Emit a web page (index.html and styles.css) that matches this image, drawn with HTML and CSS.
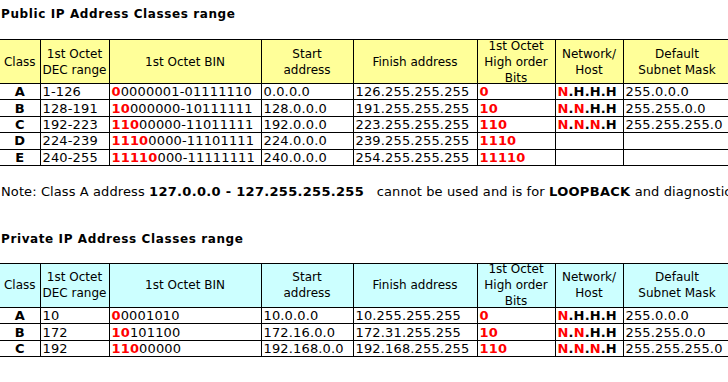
FILE: index.html
```html
<!DOCTYPE html>
<html>
<head>
<meta charset="utf-8">
<link rel="stylesheet" href="styles.css">
</head>
<body>
<div class="page">
  <h2 class="title t1">Public IP Address Classes range</h2>
  <table class="ip public">
    <colgroup>
      <col class="c1"><col class="c2"><col class="c3"><col class="c4"><col class="c5"><col class="c6"><col class="c7"><col class="c8">
    </colgroup>
    <thead>
      <tr>
        <th><div class="hc">Class</div></th>
        <th><div class="hc">1st Octet<br>DEC range</div></th>
        <th><div class="hc">1st Octet BIN</div></th>
        <th><div class="hc">Start<br>address</div></th>
        <th><div class="hc">Finish address</div></th>
        <th><div class="hc">1st Octet<br>High order<br>Bits</div></th>
        <th><div class="hc">Network/<br>Host</div></th>
        <th><div class="hc">Default<br>Subnet Mask</div></th>
      </tr>
    </thead>
    <tbody>
      <tr><td class="cls">A</td><td>1-126</td><td><b class="r">0</b>0000001-01111110</td><td>0.0.0.0</td><td>126.255.255.255</td><td class="bits">0</td><td class="nh"><span class="r">N</span>.H.H.H</td><td>255.0.0.0</td></tr>
      <tr><td class="cls">B</td><td>128-191</td><td><b class="r">10</b>000000-10111111</td><td>128.0.0.0</td><td>191.255.255.255</td><td class="bits">10</td><td class="nh"><span class="r">N</span>.<span class="r">N</span>.H.H</td><td>255.255.0.0</td></tr>
      <tr><td class="cls">C</td><td>192-223</td><td><b class="r">110</b>00000-11011111</td><td>192.0.0.0</td><td>223.255.255.255</td><td class="bits">110</td><td class="nh"><span class="r">N</span>.<span class="r">N</span>.<span class="r">N</span>.H</td><td>255.255.255.0</td></tr>
      <tr><td class="cls">D</td><td>224-239</td><td><b class="r">1110</b>0000-11101111</td><td>224.0.0.0</td><td>239.255.255.255</td><td class="bits">1110</td><td></td><td></td></tr>
      <tr><td class="cls">E</td><td>240-255</td><td><b class="r">11110</b>000-11111111</td><td>240.0.0.0</td><td>254.255.255.255</td><td class="bits">11110</td><td></td><td></td></tr>
    </tbody>
  </table>

  <p class="note">Note: Class A address <b>127.0.0.0 - 127.255.255.255</b> &nbsp;&nbsp;cannot be used and is for <b>LOOPBACK</b> and diagnostic</p>

  <h2 class="title t2">Private IP Address Classes range</h2>
  <table class="ip private">
    <colgroup>
      <col class="c1"><col class="c2"><col class="c3"><col class="c4"><col class="c5"><col class="c6"><col class="c7"><col class="c8">
    </colgroup>
    <thead>
      <tr>
        <th><div class="hc">Class</div></th>
        <th><div class="hc">1st Octet<br>DEC range</div></th>
        <th><div class="hc">1st Octet BIN</div></th>
        <th><div class="hc">Start<br>address</div></th>
        <th><div class="hc">Finish address</div></th>
        <th><div class="hc">1st Octet<br>High order<br>Bits</div></th>
        <th><div class="hc">Network/<br>Host</div></th>
        <th><div class="hc">Default<br>Subnet Mask</div></th>
      </tr>
    </thead>
    <tbody>
      <tr><td class="cls">A</td><td>10</td><td><b class="r">0</b>0001010</td><td>10.0.0.0</td><td>10.255.255.255</td><td class="bits">0</td><td class="nh"><span class="r">N</span>.H.H.H</td><td>255.0.0.0</td></tr>
      <tr><td class="cls">B</td><td>172</td><td><b class="r">10</b>101100</td><td>172.16.0.0</td><td>172.31.255.255</td><td class="bits">10</td><td class="nh"><span class="r">N</span>.<span class="r">N</span>.H.H</td><td>255.255.0.0</td></tr>
      <tr><td class="cls">C</td><td>192</td><td><b class="r">110</b>00000</td><td>192.168.0.0</td><td>192.168.255.255</td><td class="bits">110</td><td class="nh"><span class="r">N</span>.<span class="r">N</span>.<span class="r">N</span>.H</td><td>255.255.255.0</td></tr>
    </tbody>
  </table>
</div>
</body>
</html>
```
FILE: styles.css
```css
html, body {
  margin: 0;
  padding: 0;
  overflow: hidden;
  background: #ffffff;
}
body {
  font-family: "DejaVu Sans", Verdana, sans-serif;
  font-size: 13px;
  line-height: 16px;
  color: #000000;
}
.page {
  width: 760px;
}
.title {
  margin: 0;
  padding-left: 1px;
  font-size: 12px;
  letter-spacing: 0.6px;
  font-weight: bold;
  line-height: 16px;
  white-space: nowrap;
}
.t1 {
  padding-top: 6px;
  margin-bottom: 17px;
}
.t2 {
  margin-bottom: 16px;
}
.ip {
  border-collapse: collapse;
  table-layout: fixed;
  width: 731px;
}
.c1 { width: 40px; }
.c2 { width: 69px; }
.c3 { width: 152px; }
.c4 { width: 92px; }
.c5 { width: 124px; }
.c6 { width: 78px; }
.c7 { width: 68px; }
.c8 { width: 108px; }
.ip th, .ip td {
  border: 1px solid #000000;
  white-space: nowrap;
  overflow: hidden;
}
.ip th:first-child, .ip td:first-child {
  border-left: none;
}
.ip th {
  padding: 0;
  font-size: 12px;
  font-weight: normal;
  height: 43px;
}
.public th { background: #ffff99; }
.private th { background: #ccffff; }
.hc {
  height: 43px;
  display: flex;
  align-items: center;
  justify-content: center;
  text-align: center;
  line-height: 16px;
  overflow: hidden;
}
.ip td {
  padding: 0 2px;
  height: 15.4px;
  line-height: 15px;
  text-align: left;
  vertical-align: middle;
  letter-spacing: 0.15px;
}
.ip td.cls {
  text-align: center;
  font-weight: bold;
}
.r {
  color: #ff0000;
  font-weight: bold;
}
.bits {
  color: #ff0000;
  font-weight: bold;
}
.nh {
  font-weight: bold;
}
.note {
  margin: 18px 0 31px 0;
  padding-left: 1px;
  white-space: nowrap;
  line-height: 16px;
  letter-spacing: 0.1px;
}
.note b {
  letter-spacing: 0.3px;
}
```
